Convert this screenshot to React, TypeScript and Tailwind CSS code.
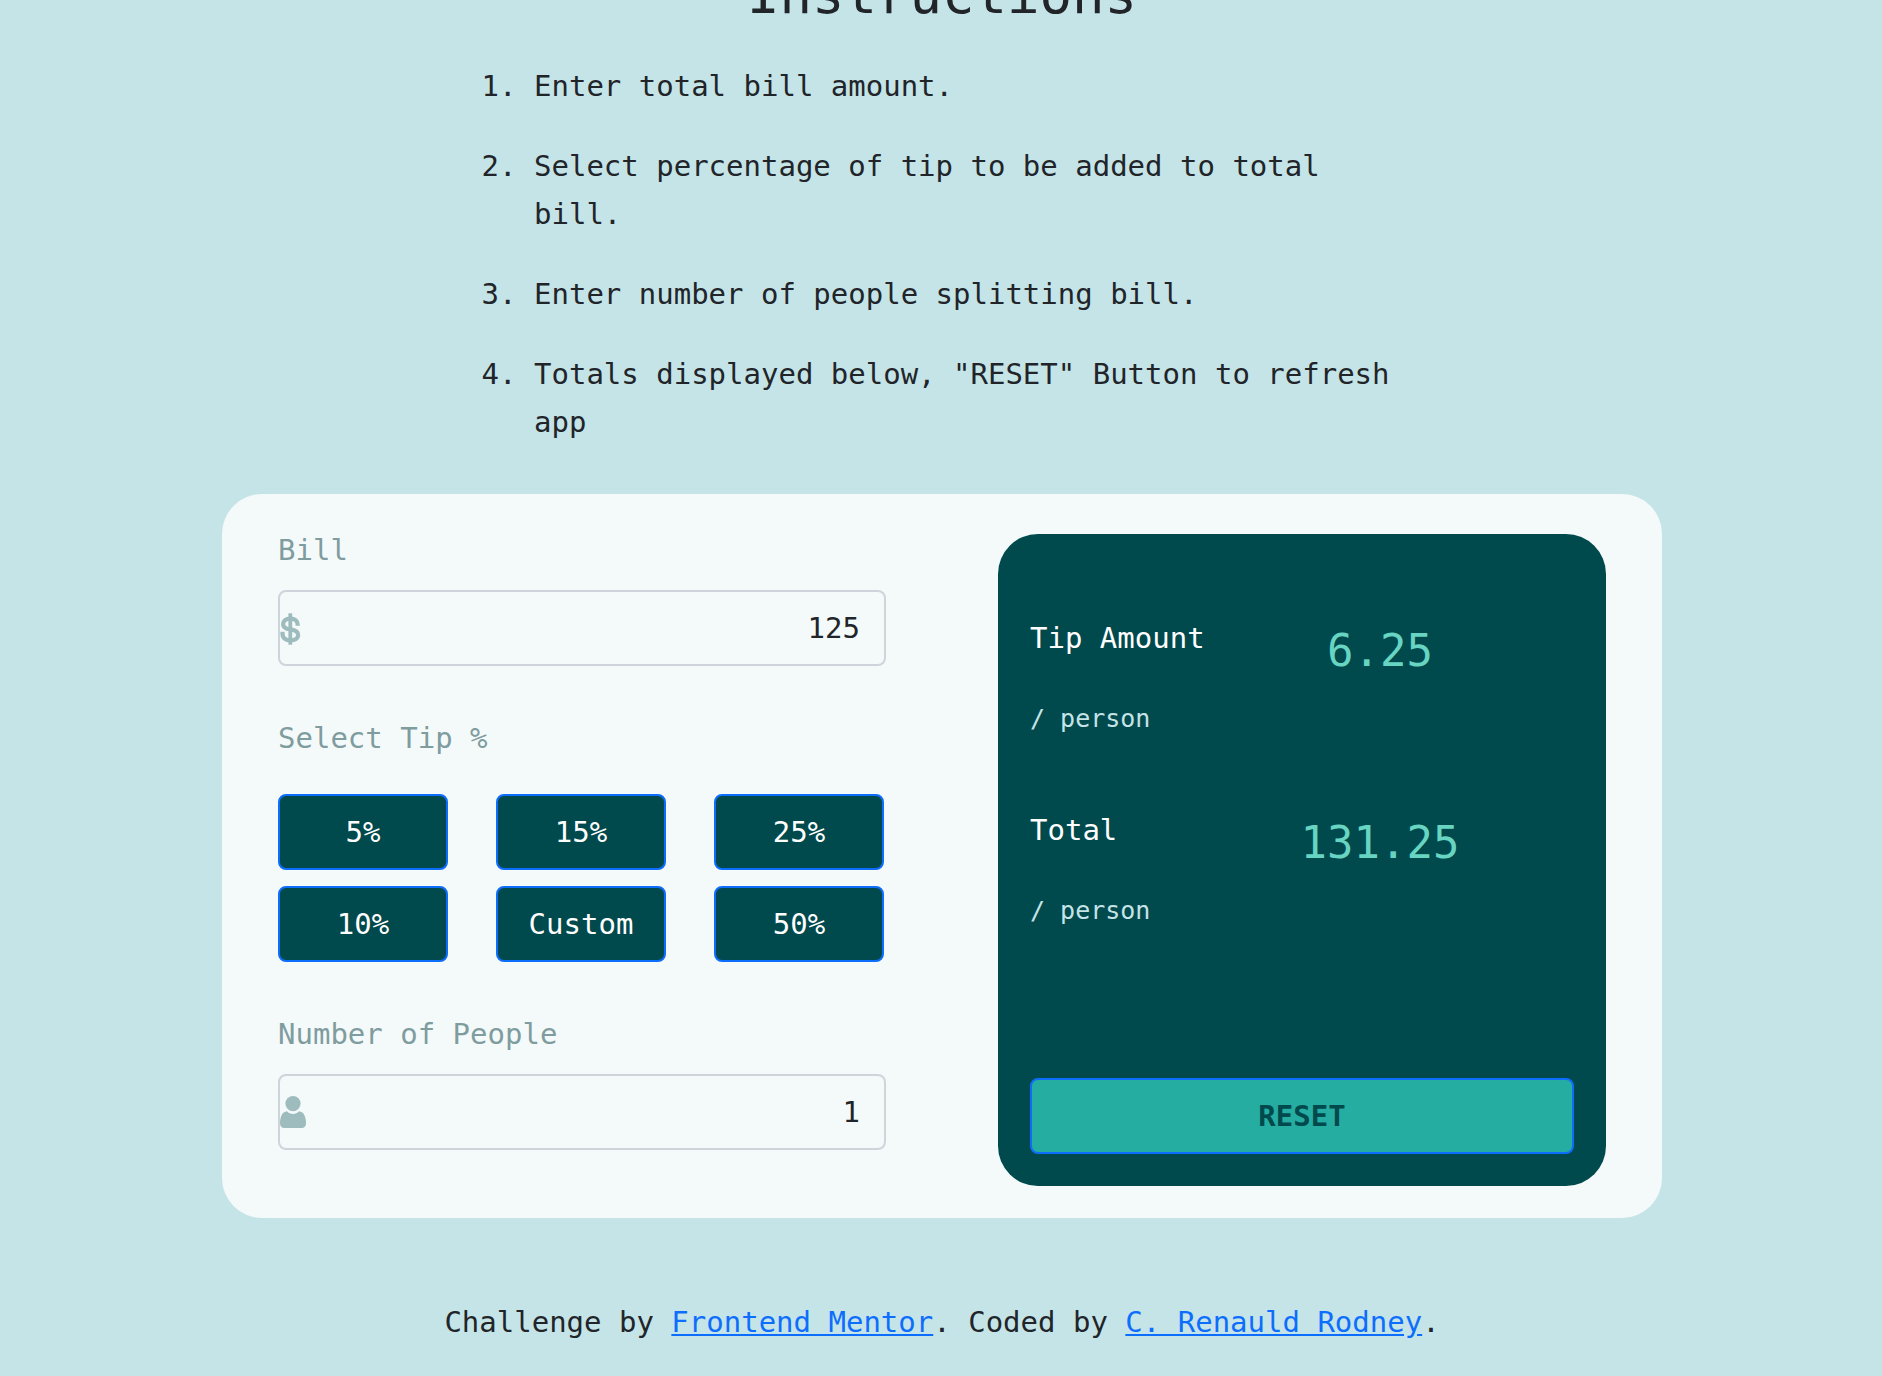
import { useState } from "react";

const steps = [
  "Enter total bill amount.",
  "Select percentage of tip to be added to total bill.",
  "Enter number of people splitting bill.",
  'Totals displayed below, "RESET" Button to refresh app',
];

const tips = [
  { label: "5%", value: 5 },
  { label: "15%", value: 15 },
  { label: "25%", value: 25 },
  { label: "10%", value: 10 },
  { label: "Custom", value: 20 },
  { label: "50%", value: 50 },
];

function DollarIcon() {
  return (
    <svg width="22" height="34" viewBox="0 0 22 34" fill="none" stroke="#9ebbbd" aria-hidden="true">
      <path d="M10.3 2.3V33.7" strokeWidth="3.8" />
      <path
        d="M17.7 14.8v-1c0-3.900-3-6.200-7.400-6.200s-7.200 2.100-7.200 5.600c0 3.600 2.600 4.600 7.200 5.200s7.800 1.800 7.800 5.600c0 3.300-3.100 5.300-7.800 5.300s-7.800-2.300-7.800-6.900v-1.600"
        strokeWidth="4.2"
      />
    </svg>
  );
}

function PersonIcon() {
  return (
    <svg width="26" height="32" viewBox="0 0 26 32" fill="#9ebbbd" aria-hidden="true">
      <circle cx="13" cy="7.6" r="7.6" />
      <path d="M7 15.300c1.600 1.700 3.600 2.600 6 2.600s4.400-.9 6-2.600c2.500.5 4.300 1.600 5.300 3.700 1.100 2.300 1.700 5.100 1.700 8 0 3.300-1.600 5-4.500 5h-17C1.600 32 0 30.300 0 27c0-2.900.6-5.700 1.700-8 1-2.100 2.800-3.200 5.300-3.700z" />
    </svg>
  );
}

type FieldProps = {
  id: string;
  label: string;
  value: string;
  icon: React.ReactNode;
  onChange: (value: string) => void;
};

function Field({ id, label, value, icon, onChange }: FieldProps) {
  return (
    <div>
      <label htmlFor={id} className="mb-4 block text-[#7f9c9f]">
        {label}
      </label>
      <div className="relative">
        <input
          id={id}
          type="text"
          inputMode="decimal"
          value={value}
          onChange={(event) => onChange(event.target.value)}
          className="block w-full rounded-lg border-2 border-[#ced4da] bg-transparent px-6 py-3 text-right text-[#212529]"
        />
        <span className="pointer-events-none absolute inset-y-0 left-0.5 flex items-center">{icon}</span>
      </div>
    </div>
  );
}

function Result({ label, value }: { label: string; value: string }) {
  return (
    <div className="grid grid-cols-[200px_1fr]">
      <div>
        <p className="mb-9 text-white">{label}</p>
        <p className="text-[25px] leading-[42px] text-[#c5e4e7]">/ person</p>
      </div>
      <output className="pr-11 text-center text-[44px] leading-[74px] text-[#67d5c1]">{value}</output>
    </div>
  );
}

export default function App() {
  const [bill, setBill] = useState("125");
  const [people, setPeople] = useState("1");
  const [tip, setTip] = useState(5);

  const amount = Number(bill) || 0;
  const count = Math.max(1, Number(people) || 1);
  const tipAmount = (amount * tip) / 100 / count;
  const total = amount / count + tipAmount;

  const reset = () => {
    setBill("");
    setPeople("");
    setTip(0);
  };

  return (
    <div className="min-h-screen overflow-hidden bg-[#c5e4e7] pb-[30px] pl-0.5 font-['DejaVu_Sans_Mono',monospace] text-[29px] leading-[48px] text-[#212529]">
      <header className="-mt-[41px]">
        <h1 className="text-center text-[54px] leading-[72px]">Instructions</h1>
        <ol className="mx-auto mt-[31px] flex w-1/2 list-decimal flex-col gap-8 pl-[62px]">
          {steps.map((step) => (
            <li key={step}>{step}</li>
          ))}
        </ol>
      </header>

      <main className="mx-auto mt-12 grid max-w-[1440px] grid-cols-2 gap-28 rounded-[40px] bg-[#f4fafa] px-14 py-8">
        <div className="flex flex-col gap-12 pb-9">
          <Field id="bill" label="Bill" value={bill} icon={<DollarIcon />} onChange={setBill} />
          <div role="group" aria-labelledby="tip-label">
            <p id="tip-label" className="mb-8 text-[#7f9c9f]">
              Select Tip %
            </p>
            <div className="grid grid-cols-3 gap-x-12 gap-y-4 pr-0.5">
              {tips.map((option) => (
                <button
                  key={option.label}
                  type="button"
                  onClick={() => setTip(option.value)}
                  className="rounded-lg border-2 border-[#0d6efd] bg-[#00494d] py-3 text-white"
                >
                  {option.label}
                </button>
              ))}
            </div>
          </div>
          <Field id="people" label="Number of People" value={people} icon={<PersonIcon />} onChange={setPeople} />
        </div>

        <section className="mt-2 flex flex-col rounded-[40px] bg-[#00494d] px-8 pt-20 pb-8">
          <div className="flex flex-col gap-[66px]">
            <Result label="Tip Amount" value={tipAmount.toFixed(2)} />
            <Result label="Total" value={total.toFixed(2)} />
          </div>
          <button
            type="button"
            onClick={reset}
            className="mt-auto rounded-lg border-2 border-[#0d6efd] bg-[#26ada1] py-3 font-bold text-[#00494d]"
          >
            RESET
          </button>
        </section>
      </main>

      <footer className="mt-20 text-center">
        Challenge by{" "}
        <a href="https://www.frontendmentor.io" className="text-[#0d6efd] underline">
          Frontend Mentor
        </a>
        . Coded by{" "}
        <a href="#author" className="text-[#0d6efd] underline">
          C. Renauld Rodney
        </a>
        .
      </footer>
    </div>
  );
}
